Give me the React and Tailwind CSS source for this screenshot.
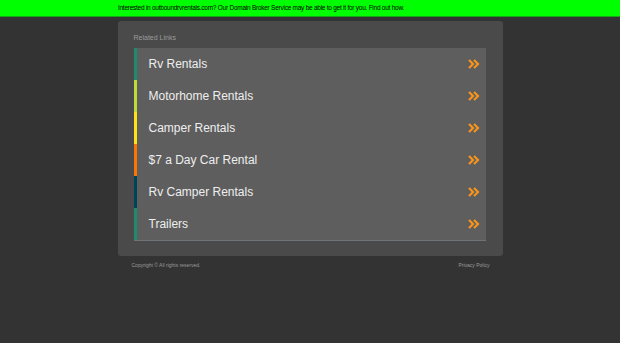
const links = [
  { label: "Rv Rentals", bar: "bg-[#1f8a70]" },
  { label: "Motorhome Rentals", bar: "bg-[#bedb39]" },
  { label: "Camper Rentals", bar: "bg-[#ffe11a]" },
  { label: "$7 a Day Car Rental", bar: "bg-[#fd7400]" },
  { label: "Rv Camper Rentals", bar: "bg-[#004358]" },
  { label: "Trailers", bar: "bg-[#1f8a70]" },
];

function Chevrons() {
  return (
    <svg width="12" height="10" viewBox="0 0 12 10" className="shrink-0">
      <path d="M1 1 L5 5 L1 9" stroke="#f7941d" strokeWidth="2.2" fill="none" />
      <path d="M6 1 L10 5 L6 9" stroke="#f7941d" strokeWidth="2.2" fill="none" />
    </svg>
  );
}

export default function App() {
  return (
    <div className="min-h-[343px] bg-[#333333] font-['Liberation_Sans',Arial,sans-serif]">
      {/* Top banner */}
      <div className="h-[17px] bg-[#00ff00] border-b border-[#17a317] flex items-center justify-center pr-[98px]">
        <p className="text-[6.5px] text-black tracking-[-0.25px] leading-none">
          Interested in outboundrvrentals.com? Our Domain Broker Service may be
          able to get it for you. Find out how.
        </p>
      </div>

      <div className="w-[385px] mx-auto pt-[4px]">
        {/* Panel */}
        <div className="bg-[#4a4a4a] rounded-[3px] pt-[13px] pb-[15px] px-[16px]">
          <p className="text-[7px] text-[#9a9a9a] mb-[7px] leading-none">
            Related Links
          </p>
          <div className="border-b border-[#6e7378] mr-[1px]">
            {links.map((link) => (
              <div key={link.label} className="flex h-[32px] bg-[#5e5e5e]">
                <div className={`w-[3px] ${link.bar}`} />
                <div className="flex-1 flex items-center justify-between pl-[12px] pr-[6px]">
                  <span className="text-[12px] text-[#eeeeee]">{link.label}</span>
                  <Chevrons />
                </div>
              </div>
            ))}
          </div>
        </div>

        {/* Footer */}
        <div className="flex justify-between pl-[14px] pr-[13px] pt-[7px] text-[5px] text-[#9a9a9a] leading-none">
          <span>Copyright © All rights reserved.</span>
          <span>Privacy Policy</span>
        </div>
      </div>
    </div>
  );
}
